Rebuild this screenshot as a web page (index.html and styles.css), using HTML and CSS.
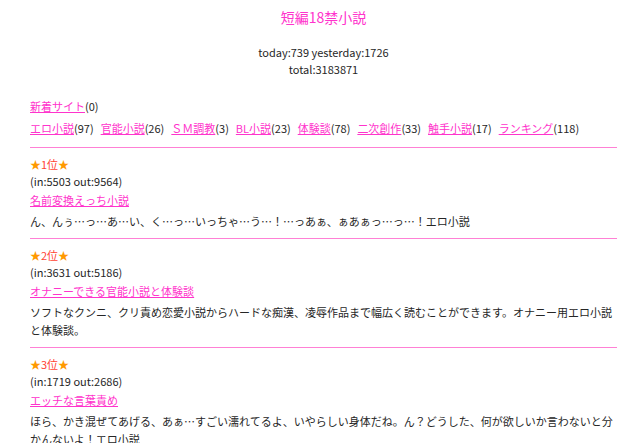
FILE: index.html
```html
<!DOCTYPE html>
<html lang="ja">
<head>
<meta charset="utf-8">
<title>短編18禁小説</title>
<link rel="stylesheet" href="styles.css">
</head>
<body>
<div class="page">
  <h1 class="title">短編18禁小説</h1>
  <div class="stats">
    <div>today:739 yesterday:1726</div>
    <div>total:3183871</div>
  </div>
  <div class="nav">
    <div class="nav-new"><a href="#">新着サイト</a>(0)</div>
    <div class="nav-cats"><span class="cat"><a href="#">エロ小説</a>(97)</span><span class="cat"><a href="#">官能小説</a>(26)</span><span class="cat"><a href="#">ＳＭ調教</a>(3)</span><span class="cat"><a href="#">BL小説</a>(23)</span><span class="cat"><a href="#">体験談</a>(78)</span><span class="cat"><a href="#">二次創作</a>(33)</span><span class="cat"><a href="#">触手小説</a>(17)</span><span class="cat"><a href="#">ランキング</a>(118)</span></div>
  </div>
  <div class="item">
    <div class="rank"><span class="star">★</span>1位<span class="star">★</span></div>
    <div class="inout">(in:5503 out:9564)</div>
    <div class="link"><a href="#">名前変換えっち小説</a></div>
    <div class="desc">ん、んぅ…っ…あ…い、く…っ…いっちゃ…う…！…っあぁ、ぁあぁっ…っ…！エロ小説</div>
  </div>
  <div class="item">
    <div class="rank"><span class="star">★</span>2位<span class="star">★</span></div>
    <div class="inout">(in:3631 out:5186)</div>
    <div class="link"><a href="#">オナニーできる官能小説と体験談</a></div>
    <div class="desc">ソフトなクンニ、クリ責め恋愛小説からハードな痴漢、凌辱作品まで幅広く読むことができます。オナニー用エロ小説と体験談。</div>
  </div>
  <div class="item">
    <div class="rank"><span class="star">★</span>3位<span class="star">★</span></div>
    <div class="inout">(in:1719 out:2686)</div>
    <div class="link"><a href="#">エッチな言葉責め</a></div>
    <div class="desc">ほら、かき混ぜてあげる、あぁ…すごい濡れてるよ、いやらしい身体だね。ん？どうした、何が欲しいか言わないと分かんないよ！エロ小説</div>
  </div>
</div>
</body>
</html>
```
FILE: styles.css
```css
html, body {
  margin: 0;
  padding: 0;
  background: #ffffff;
}
body {
  font-family: "Noto Sans CJK JP", "Noto Sans", sans-serif;
  font-size: 11px;
  color: #262626;
}
.page {
  padding: 0 23px 0 30px;
}
a {
  color: #ff33cc;
  text-decoration: underline;
}
.title {
  margin: 0;
  padding-top: 8px;
  font-size: 14px;
  font-weight: normal;
  line-height: 18px;
  color: #ff33cc;
  text-align: center;
}
.stats {
  margin-top: 18px;
  line-height: 17px;
  text-align: center;
}
.nav {
  margin-top: 19px;
  line-height: 18px;
  padding-bottom: 10px;
  border-bottom: 1px solid #ff80d5;
}
.nav-cats {
  margin-top: 4px;
  display: flex;
  flex-wrap: wrap;
  column-gap: 7px;
}
.item {
  padding-top: 8px;
  padding-bottom: 8px;
  border-bottom: 1px solid #ff80d5;
}
.rank {
  line-height: 17px;
  color: #ff4433;
}
.star {
  color: #ff9900;
}
.inout {
  line-height: 17px;
}
.link {
  margin-top: 1px;
  line-height: 18px;
}
.desc {
  margin-top: 3px;
  line-height: 18px;
}
```
